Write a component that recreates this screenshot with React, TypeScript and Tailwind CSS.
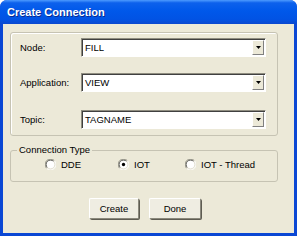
import React from 'react';

const FONT = { fontFamily: '"Liberation Sans", Arial, sans-serif' };

const Radio = ({ checked }: { checked?: boolean }) => (
  <svg width="11" height="11" viewBox="0 0 12 12" className="shrink-0">
    <circle cx="6" cy="6" r="5.5" fill="#ffffff" />
    <path d="M10.2 1.8 A5.5 5.5 0 0 0 1.8 10.2" fill="none" stroke="#8a887c" strokeWidth="1" />
    <path d="M9.4 2.6 A4.5 4.5 0 0 0 2.6 9.4" fill="none" stroke="#4a4a44" strokeWidth="1" />
    <path d="M1.8 10.2 A5.5 5.5 0 0 0 10.2 1.8" fill="none" stroke="#ffffff" strokeWidth="1" />
    <path d="M2.6 9.4 A4.5 4.5 0 0 0 9.4 2.6" fill="none" stroke="#dcd9c8" strokeWidth="1" />
    {checked && <circle cx="6" cy="6" r="1.8" fill="#000000" />}
  </svg>
);

function Combo({ value }: { value: string }) {
  return (
    <div className="w-[185px] h-[19px] flex border border-t-[#8f8d80] border-l-[#8f8d80] border-r-white border-b-white bg-white shadow-[inset_1px_1px_0_#404040]">
      <div className="flex-1 flex items-center pl-[3px] pt-[1px] text-[9.5px] text-black leading-none">{value}</div>
      <div className="w-[12px] my-[1px] mr-[1px] flex items-center justify-center bg-[#ece9d8] border border-t-white border-l-white border-r-[#808080] border-b-[#808080]">
        <svg width="5" height="3" viewBox="0 0 5 3">
          <path d="M0 0 H5 L2.5 3 Z" fill="#000" />
        </svg>
      </div>
    </div>
  );
}

function Field({ label, value, className }: { label: string; value: string; className?: string }) {
  return (
    <div className={`flex items-center ${className ?? ''}`}>
      <span className="w-[61px] text-[9.5px] text-black leading-none">{label}</span>
      <Combo value={value} />
    </div>
  );
}

function Button({ children, w }: { children: React.ReactNode; w: string }) {
  return (
    <button className={`${w} h-[21px] flex items-center justify-center rounded-[2px] bg-[#efede2] border border-t-white border-l-white border-r-[#8a887c] border-b-[#8a887c] shadow-[1px_1px_0_#5e5c52] text-[9.5px] text-black leading-none`}>
      {children}
    </button>
  );
}

export default function App() {
  return (
    <div style={FONT} className="w-[300px] h-[238px] bg-white">
      <div className="w-[297px] h-[236px] rounded-t-[7px] overflow-hidden flex flex-col bg-[#0a47d4]">
        <div className="h-[24px] shrink-0 flex items-center px-[7px] bg-[linear-gradient(to_bottom,#4d9bff_0%,#0d61ec_12%,#0058ea_45%,#0153e4_80%,#0a48cf_100%)]">
          <span className="text-white font-bold text-[11px] leading-none [text-shadow:1px_1px_0_#0b2b8f]">Create Connection</span>
        </div>
        <div className="flex-1 mx-[3px] mb-[3px] bg-[#ece9d8] pl-[7px] pt-[8px]">
          <div className="w-[268px] h-[104px] border border-[#c6c3b3] rounded-[3px] pl-[9px] pt-[5px] shadow-[inset_1px_1px_0_#ffffff]">
            <Field label="Node:" value="FILL" />
            <Field label="Application:" value="VIEW" className="mt-[16px]" />
            <Field label="Topic:" value="TAGNAME" className="mt-[18px]" />
          </div>
          <fieldset className="w-[268px] h-[38px] mt-[8px] border border-[#c6c3b3] rounded-[3px]">
            <legend className="ml-[6px] px-[2px] text-[9.5px] leading-[12px] text-black">Connection Type</legend>
            <div className="flex items-center pl-[34px] mt-[3px] text-[9.5px] text-black leading-none">
              <div className="w-[73px] flex items-center gap-[5px]"><Radio /><span>DDE</span></div>
              <div className="w-[67px] flex items-center gap-[5px]"><Radio checked /><span>IOT</span></div>
              <div className="flex items-center gap-[5px]"><Radio /><span>IOT - Thread</span></div>
            </div>
          </fieldset>
          <div className="flex gap-[10px] ml-[79px] mt-[16px]">
            <Button w="w-[50px]">Create</Button>
            <Button w="w-[52px]">Done</Button>
          </div>
        </div>
      </div>
    </div>
  );
}
